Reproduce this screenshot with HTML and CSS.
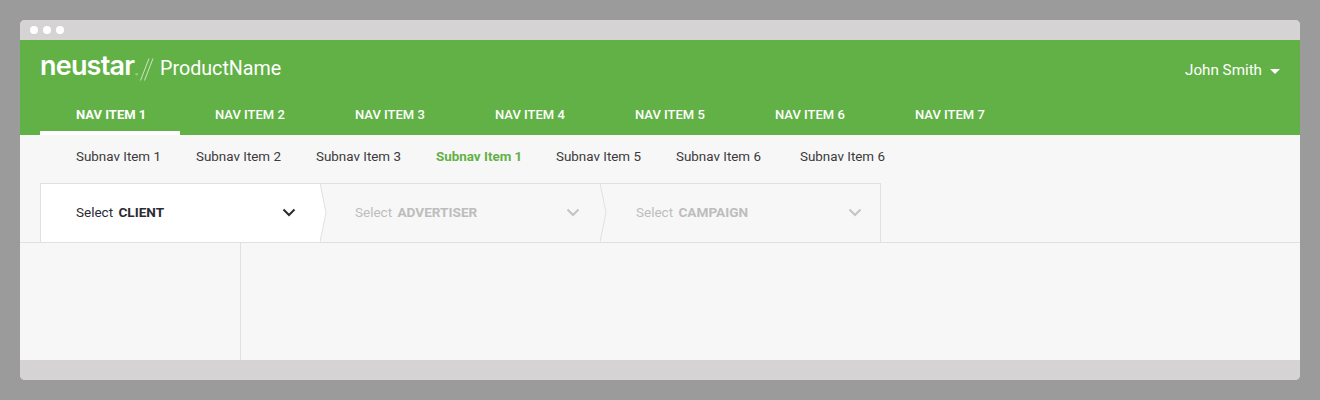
FILE: index.html
```html
<!DOCTYPE html>
<html lang="en">
<head>
<meta charset="utf-8">
<title>ProductName</title>
<link rel="stylesheet" href="styles.css">
</head>
<body>
<div class="window">
  <div class="titlebar"><span class="dot"></span><span class="dot"></span><span class="dot"></span></div>
  <header class="header">
    <div class="brand-row">
      <div class="brand">
        <span class="logo">neustar<sup class="reg">®</sup></span>
        <svg class="slashes" width="14" height="23" viewBox="0 0 14 23"><path d="M.5 22.5 9 .5M4.5 22.5 13 .5" fill="none" stroke="#fff" stroke-width=".8" opacity=".85"/></svg>
        <span class="product">ProductName</span>
      </div>
      <div class="user"><span>John Smith</span><svg class="caret" width="10" height="5" viewBox="0 0 10 5"><path d="M0 0H10L5 5Z" fill="#fff"/></svg></div>
    </div>
    <nav class="nav">
      <a class="nav-item active">NAV ITEM 1</a>
      <a class="nav-item">NAV ITEM 2</a>
      <a class="nav-item">NAV ITEM 3</a>
      <a class="nav-item">NAV ITEM 4</a>
      <a class="nav-item">NAV ITEM 5</a>
      <a class="nav-item">NAV ITEM 6</a>
      <a class="nav-item">NAV ITEM 7</a>
    </nav>
  </header>
  <main class="content">
    <nav class="subnav">
      <a class="sub-item">Subnav Item 1</a>
      <a class="sub-item">Subnav Item 2</a>
      <a class="sub-item">Subnav Item 3</a>
      <a class="sub-item current">Subnav Item 1</a>
      <a class="sub-item">Subnav Item 5</a>
      <a class="sub-item wide">Subnav Item 6</a>
      <a class="sub-item">Subnav Item 6</a>
    </nav>
    <div class="steps">
      <div class="step first">
        <span class="step-label">Select <b>CLIENT</b></span>
        <svg class="chev" width="14" height="9" viewBox="0 0 14 9"><path d="M1.5 1.5 7 7l5.5-5.5" fill="none" stroke="#2b2b33" stroke-width="2"/></svg>
        <svg class="tip" width="7" height="60" viewBox="0 0 7 60"><path d="M0 0 L6 29.5 L0 59 Z" fill="#fff"/><path d="M0 0 L6 29.5 L0 59" fill="none" stroke="#e0e0e0"/></svg>
      </div>
      <div class="step">
        <span class="step-label">Select <b>ADVERTISER</b></span>
        <svg class="chev" width="14" height="9" viewBox="0 0 14 9"><path d="M1.5 1.5 7 7l5.5-5.5" fill="none" stroke="#c4c4c4" stroke-width="2"/></svg>
        <svg class="tip" width="7" height="60" viewBox="0 0 7 60"><path d="M0 0 L6 29.5 L0 59" fill="none" stroke="#e0e0e0"/></svg>
      </div>
      <div class="step last">
        <span class="step-label">Select <b>CAMPAIGN</b></span>
        <svg class="chev" width="14" height="9" viewBox="0 0 14 9"><path d="M1.5 1.5 7 7l5.5-5.5" fill="none" stroke="#c4c4c4" stroke-width="2"/></svg>
      </div>
    </div>
    <div class="panes">
      <aside class="side"></aside>
      <section class="pane"></section>
    </div>
  </main>
  <footer class="footer"></footer>
</div>
</body>
</html>
```
FILE: styles.css
```css
* { box-sizing: border-box; }
html, body { margin: 0; height: 400px; overflow: hidden; }
body {
  background: #9b9b9b;
  padding: 20px;
  font-family: "Roboto", "Liberation Sans", sans-serif;
}
.window {
  height: 360px;
  display: flex;
  flex-direction: column;
  border-radius: 5px;
  overflow: hidden;
  background: #f7f7f7;
}
.titlebar {
  height: 20px;
  background: #d5d3d4;
  display: flex;
  align-items: center;
  gap: 5px;
  padding-left: 10px;
  flex: none;
}
.dot { width: 8px; height: 8px; border-radius: 50%; background: #fff; }
.header { height: 95px; background: #62b146; color: #fff; flex: none; display: flex; flex-direction: column; }
.brand-row {
  height: 56px;
  padding: 0 20px;
  display: flex;
  align-items: center;
  justify-content: space-between;
}
.brand { display: flex; align-items: center; }
.logo {
  font-family: "Inter", sans-serif;
  font-weight: 600;
  font-size: 27px;
  line-height: 24px;
  width: 98px;
  white-space: nowrap;
  position: relative;
  top: -2px;
  letter-spacing: -.8px;
}
.reg { font-size: 4px; line-height: 0; opacity: .7; vertical-align: -1px; letter-spacing: 0; margin-left: 1px; font-weight: 400; }
.slashes { margin: 2px 0 0 2px; }
.product { font-size: 19.7px; margin-left: 6px; font-weight: 400; }
.user { display: flex; align-items: center; gap: 8px; font-size: 15.2px; font-weight: 400; margin-top: 3px; }
.caret { margin-top: 3px; }
.nav { display: flex; padding-left: 20px; height: 39px; }
.nav-item {
  width: 140px;
  padding: 10px 0 0 35px;
  font-size: 13px;
  font-weight: 500;
  line-height: 18px;
  color: #fff;
  border-bottom: 4px solid transparent;
}
.nav-item.active { border-bottom-color: #fff; font-weight: 700; padding-left: 36px; }
.content { flex: 1; display: flex; flex-direction: column; min-height: 0; }
.subnav { height: 48px; flex: none; display: flex; padding: 13px 0 0 56px; }
.sub-item { width: 120px; font-size: 13.4px; line-height: 18px; color: #3a3a3a; }
.sub-item.wide { width: 124px; }
.sub-item.current { color: #62b146; font-weight: 700; }
.steps {
  height: 60px;
  flex: none;
  display: flex;
  padding-left: 20px;
  border-bottom: 1px solid #e0e0e0;
}
.step {
  position: relative;
  width: 280px;
  height: 60px;
  display: flex;
  align-items: center;
  justify-content: space-between;
  padding: 0 20px 2px 35px;
  border-top: 1px solid #e0e0e0;
  border-bottom: 1px solid #e0e0e0;
  color: #bdbdbd;
  font-size: 13.5px;
}
.step.first { background: #fff; border-left: 1px solid #e0e0e0; color: #2b2b33; padding-right: 24px; }
.step.last { width: 281px; border-right: 1px solid #e0e0e0; padding: 0 18px 2px 36px; }
.step b { margin-left: 2px; font-weight: 700; font-size: 13.6px; }
.tip { position: absolute; left: 280px; top: -1px; z-index: 1; }
.first .tip { left: 279px; }
.panes { flex: 1; display: flex; min-height: 0; }
.side { width: 221px; border-right: 1px solid #e0e0e0; }
.pane { flex: 1; }
.footer { height: 20px; background: #d5d3d4; flex: none; }
```
